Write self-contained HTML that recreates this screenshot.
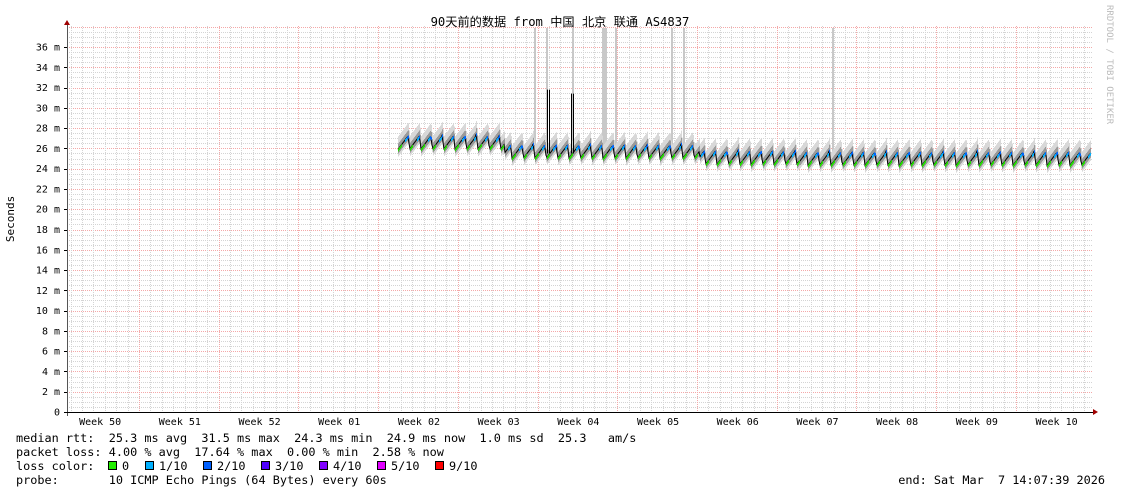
<!DOCTYPE html>
<html><head><meta charset="utf-8"><style>
html,body{margin:0;padding:0;background:#fff;width:1121px;height:494px;overflow:hidden}
svg{display:block}
text{font-family:"DejaVu Sans Mono","Liberation Mono",monospace;fill:#000}
</style></head><body>
<svg id="s" width="1121" height="494" xmlns="http://www.w3.org/2000/svg">
<g id="grid"></g>
<g id="data"></g>
<text x="560" y="26" font-size="12.2" text-anchor="middle" style="font-family:'DejaVu Sans Mono','Noto Sans CJK SC',monospace">90天前的数据 from  中国 北京 联通 AS4837</text>
<text transform="translate(14,219) rotate(-90)" font-size="11" text-anchor="middle">Seconds</text>
<text transform="translate(1107,5) rotate(90)" font-size="9" style="fill:#bbb">RRDTOOL / TOBI OETIKER</text>
<g font-size="11.85" id="leg">
<text x="16" y="442" xml:space="preserve">median rtt:  25.3 ms avg  31.5 ms max  24.3 ms min  24.9 ms now  1.0 ms sd  25.3   am/s</text>
<text x="16" y="456" xml:space="preserve">packet loss: 4.00 % avg  17.64 % max  0.00 % min  2.58 % now</text>
<text x="16" y="470" xml:space="preserve">loss color:  </text>
<text x="16" y="484" xml:space="preserve">probe:       10 ICMP Echo Pings (64 Bytes) every 60s</text>
<text x="1105" y="484" text-anchor="end" xml:space="preserve">end: Sat Mar  7 14:07:39 2026</text>
</g>
</svg>
<script>
var NS="http://www.w3.org/2000/svg";
function el(p,t,a){var e=document.createElementNS(NS,t);for(var k in a)e.setAttribute(k,a[k]);p.appendChild(e);return e;}
var g=document.getElementById('grid'),d=document.getElementById('data');
var X0=67,X1=1093,Y0=412,YT=26;
function yv(m){return Y0-m*(365/36);}
for(var m=0.5;m<=38;m+=0.5){var y=Math.round(yv(m))+.5;if(y<YT)break;
 if(m%2==0) el(g,'line',{x1:X0,x2:X1,y1:y,y2:y,stroke:'#f4a8a8','stroke-dasharray':'1,1','stroke-width':1});
 else el(g,'line',{x1:X0,x2:X1,y1:y,y2:y,stroke:'#d4d4d4','stroke-dasharray':'1,1','stroke-width':1});}
var wk=79.7,first=139;
for(var x=first-wk;x<X1;x+=wk/7){var xr=Math.round(x)+.5;if(xr<=X0+1)continue;
 el(g,'line',{x1:xr,x2:xr,y1:YT,y2:Y0,stroke:'#d4d4d4','stroke-dasharray':'1,1'});}
var names=['50','51','52','01','02','03','04','05','06','07','08','09','10'];
for(var i=0;i<12;i++){var xr=Math.round(first+i*wk)+.5;
 el(g,'line',{x1:xr,x2:xr,y1:YT,y2:Y0,stroke:'#f4a8a8','stroke-dasharray':'1,1'});}
for(var i=0;i<13;i++){var t=el(g,'text',{x:first+(i-0.5)*wk+1,y:425,'font-size':10,'text-anchor':'middle'});t.textContent='Week '+names[i];}
for(var m=0;m<=36;m+=2){var t=el(g,'text',{x:60,y:yv(m)+3.5,'font-size':10,'text-anchor':'end'});t.textContent=m==0?'0':(m+' m');
 el(g,'line',{x1:X0-3,x2:X0,y1:Math.round(yv(m))+.5,y2:Math.round(yv(m))+.5,stroke:'#000'});}
el(g,'line',{x1:X0+.5,x2:X0+.5,y1:24,y2:Y0+4,stroke:'#555'});
el(g,'line',{x1:X0-3,x2:X1,y1:Y0+.5,y2:Y0+.5,stroke:'#000'});
el(g,'polygon',{points:'64,25 70,25 67,20',fill:'#a00000'});
el(g,'polygon',{points:'1093,409 1093,415 1098,412',fill:'#a00000'});
[[534,1,28],[546,1,28],[572,1,28],[602,4,28],[615,1,28],[671,1,28],[683,1,28],[832,1,28]].forEach(function(s){
 el(d,'rect',{x:s[0],y:s[2],width:s[1]+1,height:130,fill:'#c8c8c8'});});
function base(x){if(x<505)return 26.5;if(x<700)return 25.6;if(x<800)return 25.0;return 24.9;}
var day=wk/7,pts=[];
for(var x=398;x<=1090;x++){var ph=((x-398)%day)/day;var b=base(x);
 var v=b-0.6+1.5*ph; if(ph>0.85)v=b+0.9-(ph-0.85)*8;
 pts.push([x,v]);
 el(d,'rect',{x:x,y:yv(v+1.3),width:1,height:yv(v-0.7)-yv(v+1.3),fill:'#d8d8d8'});
 el(d,'rect',{x:x,y:yv(v+0.6),width:1,height:yv(v-0.4)-yv(v+0.6),fill:'#9a9a9a'});}
var pd='M'+pts.map(function(p){return p[0]+','+yv(p[1]).toFixed(1);}).join(' L');
el(d,'path',{d:pd,stroke:'#000','stroke-width':1,fill:'none'});
pts.forEach(function(p){var ph=((p[0]-398)%day)/day;
 if(ph<0.3) el(d,'rect',{x:p[0],y:yv(p[1])-1,width:1,height:3,fill:'#22dd00'});
 else if(ph>0.6&&ph<0.9) el(d,'rect',{x:p[0],y:yv(p[1])-1,width:1,height:3,fill:(ph>0.78?'#0066ff':'#00b0ff')});});
el(d,'path',{d:'M547.5,'+yv(25.5)+' L547.5,'+yv(31.8)+' M549.5,'+yv(31.8)+' L549.5,'+yv(25.5),stroke:'#000',fill:'none'});
el(d,'path',{d:'M571.5,'+yv(25.5)+' L571.5,'+yv(31.4)+' M573.5,'+yv(31.4)+' L573.5,'+yv(25.5),stroke:'#000',fill:'none'});
var lg=document.getElementById('leg');
var cols=[['#22ee00','0'],['#00b0ff','1/10'],['#0060ff','2/10'],['#5000ff','3/10'],['#8000ff','4/10'],['#e000ff','5/10'],['#ff0000','9/10']];
var xs=[108,145,203,261,319,377,435];
cols.forEach(function(c,i){el(lg,'rect',{x:xs[i]+.5,y:461.5,width:8,height:8,fill:c[0],stroke:'#000'});
 var t=el(lg,'text',{x:xs[i]+14,y:470});t.textContent=c[1];});
</script>
</body></html>
